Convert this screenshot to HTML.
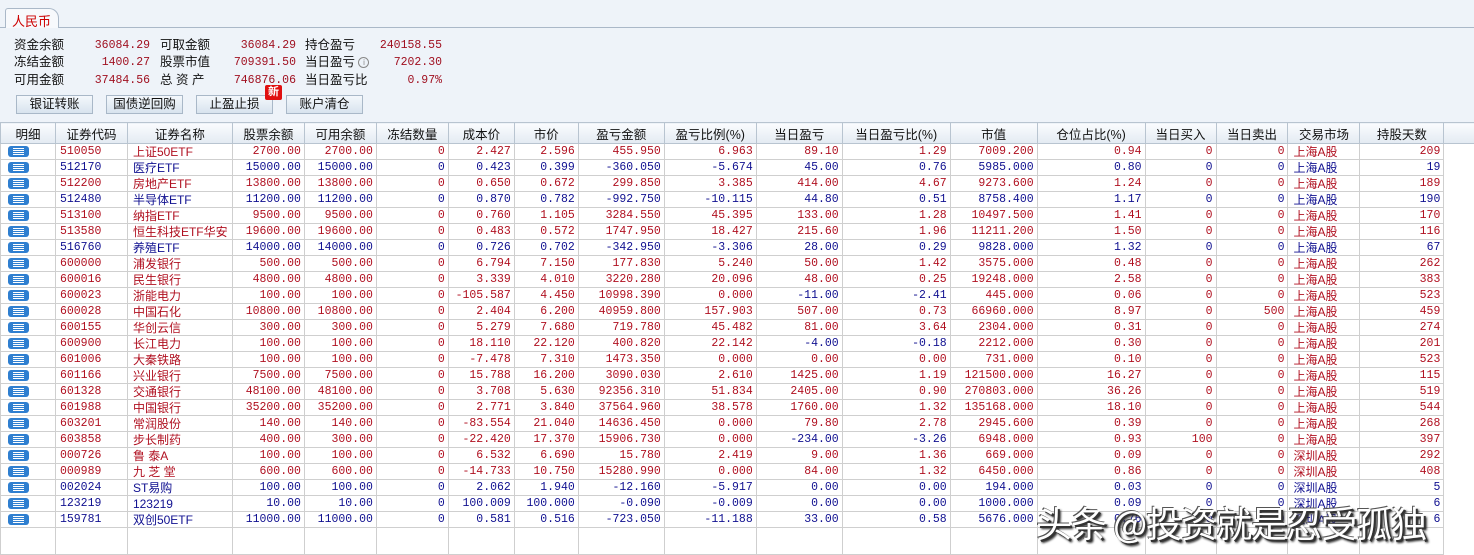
<!DOCTYPE html>
<html><head><meta charset="utf-8">
<style>
*{margin:0;padding:0;box-sizing:border-box}
body{width:1474px;height:554px;overflow:hidden;background:#eef2f8;font-family:"Liberation Sans","Noto Sans CJK SC",sans-serif;font-size:12px;position:relative}
.top{position:absolute;left:0;top:0;width:1474px;height:122px;background:#eef3f9}
.tab{position:absolute;left:5px;top:8px;width:54px;height:20px;border:1px solid #aab8c8;border-bottom:none;background:#f7f9fc;color:#c00;font-size:13px;padding:2px 0 0 6px;border-radius:3px 10px 0 0}
.tline{position:absolute;left:0;top:27px;width:1474px;height:1px;background:#aab8c8}
.lbl,.val{position:absolute;height:17px;line-height:17px}
.lbl{color:#111;font-size:12.5px}
.val{color:#a01020;font-family:"Liberation Mono",monospace;font-size:11.5px;text-align:right}
.btn{position:absolute;top:95px;width:77px;height:19px;border:1px solid #a9b8c8;background:linear-gradient(#f4f8fc,#d8e3ee);font-size:12.5px;text-align:center;line-height:17px;color:#111}
.new{position:absolute;left:265px;top:85px;width:17px;height:15px;background:#e01010;color:#fff;font-size:11px;font-weight:bold;text-align:center;line-height:15px;border-radius:2px}
table{position:absolute;left:0;top:122px;border-collapse:collapse;table-layout:fixed;background:#fff}
th{height:21px;font-weight:normal;font-size:12.5px;background:linear-gradient(#fafcfe,#e3eaf2);border:1px solid #b8c4d0;color:#111}
td{height:16px;border:1px solid #cfcfcf;font-family:"Liberation Mono","Noto Sans CJK SC",monospace;font-size:11.5px;text-align:right;padding:0 3px;white-space:nowrap;overflow:hidden;line-height:14px}
td.l{text-align:left;padding-left:4px}
td.n{font-family:"Liberation Sans","Noto Sans CJK SC",sans-serif;font-size:12px;text-align:left;padding-left:5px}
tr.r td{color:#b01020}
tr.b td{color:#101090}
tr td.bb{color:#101090}
td.i{padding:0 0 0 7px}
.ic{display:block;width:21px;height:11px;background:#2f7fd0;border-radius:3px;position:relative}
.ic:after{content:"";position:absolute;left:5px;top:2px;width:11px;height:1px;background:#fff;box-shadow:0 2px 0 #fff,0 4px 0 #fff,0 6px 0 #fff}
tr.e td{height:27px}
td.x{border-left:none;border-right:none;border-top:none;border-bottom:none}
.wm{position:absolute;left:1036px;top:496px;font-size:36px;color:#fff;font-family:"Noto Sans CJK SC",sans-serif;text-shadow:2px 2px 0 #333,-1px -1px 0 #555,3px 3px 2px #222;white-space:nowrap;letter-spacing:-1px}
</style></head><body>
<div class="top"></div>
<div class="tline"></div>
<div class="tab">人民币</div>
<div class="lbl" style="left:14px;top:37px">资金余额</div>
<div class="lbl" style="left:14px;top:54px">冻结金额</div>
<div class="lbl" style="left:14px;top:72px">可用金额</div>
<div class="val" style="left:80px;top:37px;width:70px">36084.29</div>
<div class="val" style="left:80px;top:54px;width:70px">1400.27</div>
<div class="val" style="left:80px;top:72px;width:70px">37484.56</div>
<div class="lbl" style="left:160px;top:37px">可取金额</div>
<div class="lbl" style="left:160px;top:54px">股票市值</div>
<div class="lbl" style="left:160px;top:72px">总&nbsp;资&nbsp;产</div>
<div class="val" style="left:226px;top:37px;width:70px">36084.29</div>
<div class="val" style="left:226px;top:54px;width:70px">709391.50</div>
<div class="val" style="left:226px;top:72px;width:70px">746876.06</div>
<div class="lbl" style="left:305px;top:37px">持仓盈亏</div>
<div class="lbl" style="left:305px;top:54px">当日盈亏 <span style="display:inline-block;width:11px;height:11px;border:1px solid #888;border-radius:50%;font-size:8px;line-height:9px;text-align:center;color:#888;vertical-align:1px">i</span></div>
<div class="lbl" style="left:305px;top:72px">当日盈亏比</div>
<div class="val" style="left:370px;top:37px;width:72px">240158.55</div>
<div class="val" style="left:370px;top:54px;width:72px">7202.30</div>
<div class="val" style="left:370px;top:72px;width:72px">0.97%</div>
<div class="btn" style="left:16px">银证转账</div>
<div class="btn" style="left:106px">国债逆回购</div>
<div class="btn" style="left:196px">止盈止损</div>
<div class="btn" style="left:286px">账户清仓</div>
<div class="new">新</div>
<table>
<colgroup><col style="width:55px"><col style="width:72px"><col style="width:105px"><col style="width:72px"><col style="width:72px"><col style="width:72px"><col style="width:66px"><col style="width:64px"><col style="width:86px"><col style="width:92px"><col style="width:86px"><col style="width:108px"><col style="width:87px"><col style="width:108px"><col style="width:71px"><col style="width:72px"><col style="width:72px"><col style="width:84px"><col style="width:30px"></colgroup>
<tr><th>明细</th><th>证券代码</th><th>证券名称</th><th>股票余额</th><th>可用余额</th><th>冻结数量</th><th>成本价</th><th>市价</th><th>盈亏金额</th><th>盈亏比例(%)</th><th>当日盈亏</th><th>当日盈亏比(%)</th><th>市值</th><th>仓位占比(%)</th><th>当日买入</th><th>当日卖出</th><th>交易市场</th><th>持股天数</th><th style="border-right:none"></th></tr>
<tr class="r"><td class="i"><i class="ic"></i></td><td class="l">510050</td><td class="n">上证50ETF</td><td>2700.00</td><td>2700.00</td><td>0</td><td>2.427</td><td>2.596</td><td>455.950</td><td>6.963</td><td>89.10</td><td>1.29</td><td>7009.200</td><td>0.94</td><td>0</td><td>0</td><td class="n">上海A股</td><td>209</td><td class="x"></td></tr>
<tr class="b"><td class="i"><i class="ic"></i></td><td class="l">512170</td><td class="n">医疗ETF</td><td>15000.00</td><td>15000.00</td><td>0</td><td>0.423</td><td>0.399</td><td>-360.050</td><td>-5.674</td><td>45.00</td><td>0.76</td><td>5985.000</td><td>0.80</td><td>0</td><td>0</td><td class="n">上海A股</td><td>19</td><td class="x"></td></tr>
<tr class="r"><td class="i"><i class="ic"></i></td><td class="l">512200</td><td class="n">房地产ETF</td><td>13800.00</td><td>13800.00</td><td>0</td><td>0.650</td><td>0.672</td><td>299.850</td><td>3.385</td><td>414.00</td><td>4.67</td><td>9273.600</td><td>1.24</td><td>0</td><td>0</td><td class="n">上海A股</td><td>189</td><td class="x"></td></tr>
<tr class="b"><td class="i"><i class="ic"></i></td><td class="l">512480</td><td class="n">半导体ETF</td><td>11200.00</td><td>11200.00</td><td>0</td><td>0.870</td><td>0.782</td><td>-992.750</td><td>-10.115</td><td>44.80</td><td>0.51</td><td>8758.400</td><td>1.17</td><td>0</td><td>0</td><td class="n">上海A股</td><td>190</td><td class="x"></td></tr>
<tr class="r"><td class="i"><i class="ic"></i></td><td class="l">513100</td><td class="n">纳指ETF</td><td>9500.00</td><td>9500.00</td><td>0</td><td>0.760</td><td>1.105</td><td>3284.550</td><td>45.395</td><td>133.00</td><td>1.28</td><td>10497.500</td><td>1.41</td><td>0</td><td>0</td><td class="n">上海A股</td><td>170</td><td class="x"></td></tr>
<tr class="r"><td class="i"><i class="ic"></i></td><td class="l">513580</td><td class="n">恒生科技ETF华安</td><td>19600.00</td><td>19600.00</td><td>0</td><td>0.483</td><td>0.572</td><td>1747.950</td><td>18.427</td><td>215.60</td><td>1.96</td><td>11211.200</td><td>1.50</td><td>0</td><td>0</td><td class="n">上海A股</td><td>116</td><td class="x"></td></tr>
<tr class="b"><td class="i"><i class="ic"></i></td><td class="l">516760</td><td class="n">养殖ETF</td><td>14000.00</td><td>14000.00</td><td>0</td><td>0.726</td><td>0.702</td><td>-342.950</td><td>-3.306</td><td>28.00</td><td>0.29</td><td>9828.000</td><td>1.32</td><td>0</td><td>0</td><td class="n">上海A股</td><td>67</td><td class="x"></td></tr>
<tr class="r"><td class="i"><i class="ic"></i></td><td class="l">600000</td><td class="n">浦发银行</td><td>500.00</td><td>500.00</td><td>0</td><td>6.794</td><td>7.150</td><td>177.830</td><td>5.240</td><td>50.00</td><td>1.42</td><td>3575.000</td><td>0.48</td><td>0</td><td>0</td><td class="n">上海A股</td><td>262</td><td class="x"></td></tr>
<tr class="r"><td class="i"><i class="ic"></i></td><td class="l">600016</td><td class="n">民生银行</td><td>4800.00</td><td>4800.00</td><td>0</td><td>3.339</td><td>4.010</td><td>3220.280</td><td>20.096</td><td>48.00</td><td>0.25</td><td>19248.000</td><td>2.58</td><td>0</td><td>0</td><td class="n">上海A股</td><td>383</td><td class="x"></td></tr>
<tr class="r"><td class="i"><i class="ic"></i></td><td class="l">600023</td><td class="n">浙能电力</td><td>100.00</td><td>100.00</td><td>0</td><td>-105.587</td><td>4.450</td><td>10998.390</td><td>0.000</td><td class="bb">-11.00</td><td class="bb">-2.41</td><td>445.000</td><td>0.06</td><td>0</td><td>0</td><td class="n">上海A股</td><td>523</td><td class="x"></td></tr>
<tr class="r"><td class="i"><i class="ic"></i></td><td class="l">600028</td><td class="n">中国石化</td><td>10800.00</td><td>10800.00</td><td>0</td><td>2.404</td><td>6.200</td><td>40959.800</td><td>157.903</td><td>507.00</td><td>0.73</td><td>66960.000</td><td>8.97</td><td>0</td><td>500</td><td class="n">上海A股</td><td>459</td><td class="x"></td></tr>
<tr class="r"><td class="i"><i class="ic"></i></td><td class="l">600155</td><td class="n">华创云信</td><td>300.00</td><td>300.00</td><td>0</td><td>5.279</td><td>7.680</td><td>719.780</td><td>45.482</td><td>81.00</td><td>3.64</td><td>2304.000</td><td>0.31</td><td>0</td><td>0</td><td class="n">上海A股</td><td>274</td><td class="x"></td></tr>
<tr class="r"><td class="i"><i class="ic"></i></td><td class="l">600900</td><td class="n">长江电力</td><td>100.00</td><td>100.00</td><td>0</td><td>18.110</td><td>22.120</td><td>400.820</td><td>22.142</td><td class="bb">-4.00</td><td class="bb">-0.18</td><td>2212.000</td><td>0.30</td><td>0</td><td>0</td><td class="n">上海A股</td><td>201</td><td class="x"></td></tr>
<tr class="r"><td class="i"><i class="ic"></i></td><td class="l">601006</td><td class="n">大秦铁路</td><td>100.00</td><td>100.00</td><td>0</td><td>-7.478</td><td>7.310</td><td>1473.350</td><td>0.000</td><td>0.00</td><td>0.00</td><td>731.000</td><td>0.10</td><td>0</td><td>0</td><td class="n">上海A股</td><td>523</td><td class="x"></td></tr>
<tr class="r"><td class="i"><i class="ic"></i></td><td class="l">601166</td><td class="n">兴业银行</td><td>7500.00</td><td>7500.00</td><td>0</td><td>15.788</td><td>16.200</td><td>3090.030</td><td>2.610</td><td>1425.00</td><td>1.19</td><td>121500.000</td><td>16.27</td><td>0</td><td>0</td><td class="n">上海A股</td><td>115</td><td class="x"></td></tr>
<tr class="r"><td class="i"><i class="ic"></i></td><td class="l">601328</td><td class="n">交通银行</td><td>48100.00</td><td>48100.00</td><td>0</td><td>3.708</td><td>5.630</td><td>92356.310</td><td>51.834</td><td>2405.00</td><td>0.90</td><td>270803.000</td><td>36.26</td><td>0</td><td>0</td><td class="n">上海A股</td><td>519</td><td class="x"></td></tr>
<tr class="r"><td class="i"><i class="ic"></i></td><td class="l">601988</td><td class="n">中国银行</td><td>35200.00</td><td>35200.00</td><td>0</td><td>2.771</td><td>3.840</td><td>37564.960</td><td>38.578</td><td>1760.00</td><td>1.32</td><td>135168.000</td><td>18.10</td><td>0</td><td>0</td><td class="n">上海A股</td><td>544</td><td class="x"></td></tr>
<tr class="r"><td class="i"><i class="ic"></i></td><td class="l">603201</td><td class="n">常润股份</td><td>140.00</td><td>140.00</td><td>0</td><td>-83.554</td><td>21.040</td><td>14636.450</td><td>0.000</td><td>79.80</td><td>2.78</td><td>2945.600</td><td>0.39</td><td>0</td><td>0</td><td class="n">上海A股</td><td>268</td><td class="x"></td></tr>
<tr class="r"><td class="i"><i class="ic"></i></td><td class="l">603858</td><td class="n">步长制药</td><td>400.00</td><td>300.00</td><td>0</td><td>-22.420</td><td>17.370</td><td>15906.730</td><td>0.000</td><td class="bb">-234.00</td><td class="bb">-3.26</td><td>6948.000</td><td>0.93</td><td>100</td><td>0</td><td class="n">上海A股</td><td>397</td><td class="x"></td></tr>
<tr class="r"><td class="i"><i class="ic"></i></td><td class="l">000726</td><td class="n">鲁&nbsp;泰A</td><td>100.00</td><td>100.00</td><td>0</td><td>6.532</td><td>6.690</td><td>15.780</td><td>2.419</td><td>9.00</td><td>1.36</td><td>669.000</td><td>0.09</td><td>0</td><td>0</td><td class="n">深圳A股</td><td>292</td><td class="x"></td></tr>
<tr class="r"><td class="i"><i class="ic"></i></td><td class="l">000989</td><td class="n">九&nbsp;芝&nbsp;堂</td><td>600.00</td><td>600.00</td><td>0</td><td>-14.733</td><td>10.750</td><td>15280.990</td><td>0.000</td><td>84.00</td><td>1.32</td><td>6450.000</td><td>0.86</td><td>0</td><td>0</td><td class="n">深圳A股</td><td>408</td><td class="x"></td></tr>
<tr class="b"><td class="i"><i class="ic"></i></td><td class="l">002024</td><td class="n">ST易购</td><td>100.00</td><td>100.00</td><td>0</td><td>2.062</td><td>1.940</td><td>-12.160</td><td>-5.917</td><td>0.00</td><td>0.00</td><td>194.000</td><td>0.03</td><td>0</td><td>0</td><td class="n">深圳A股</td><td>5</td><td class="x"></td></tr>
<tr class="b"><td class="i"><i class="ic"></i></td><td class="l">123219</td><td class="n">123219</td><td>10.00</td><td>10.00</td><td>0</td><td>100.009</td><td>100.000</td><td>-0.090</td><td>-0.009</td><td>0.00</td><td>0.00</td><td>1000.000</td><td>0.09</td><td>0</td><td>0</td><td class="n">深圳A股</td><td>6</td><td class="x"></td></tr>
<tr class="b"><td class="i"><i class="ic"></i></td><td class="l">159781</td><td class="n">双创50ETF</td><td>11000.00</td><td>11000.00</td><td>0</td><td>0.581</td><td>0.516</td><td>-723.050</td><td>-11.188</td><td>33.00</td><td>0.58</td><td>5676.000</td><td>0.76</td><td>0</td><td>0</td><td class="n">深圳A股</td><td>6</td><td class="x"></td></tr>
<tr class="e"><td></td><td></td><td></td><td></td><td></td><td></td><td></td><td></td><td></td><td></td><td></td><td></td><td></td><td></td><td></td><td></td><td></td><td></td><td class="x"></td></tr>
</table>
<div class="wm">头条 @投资就是忍受孤独</div>
</body></html>
